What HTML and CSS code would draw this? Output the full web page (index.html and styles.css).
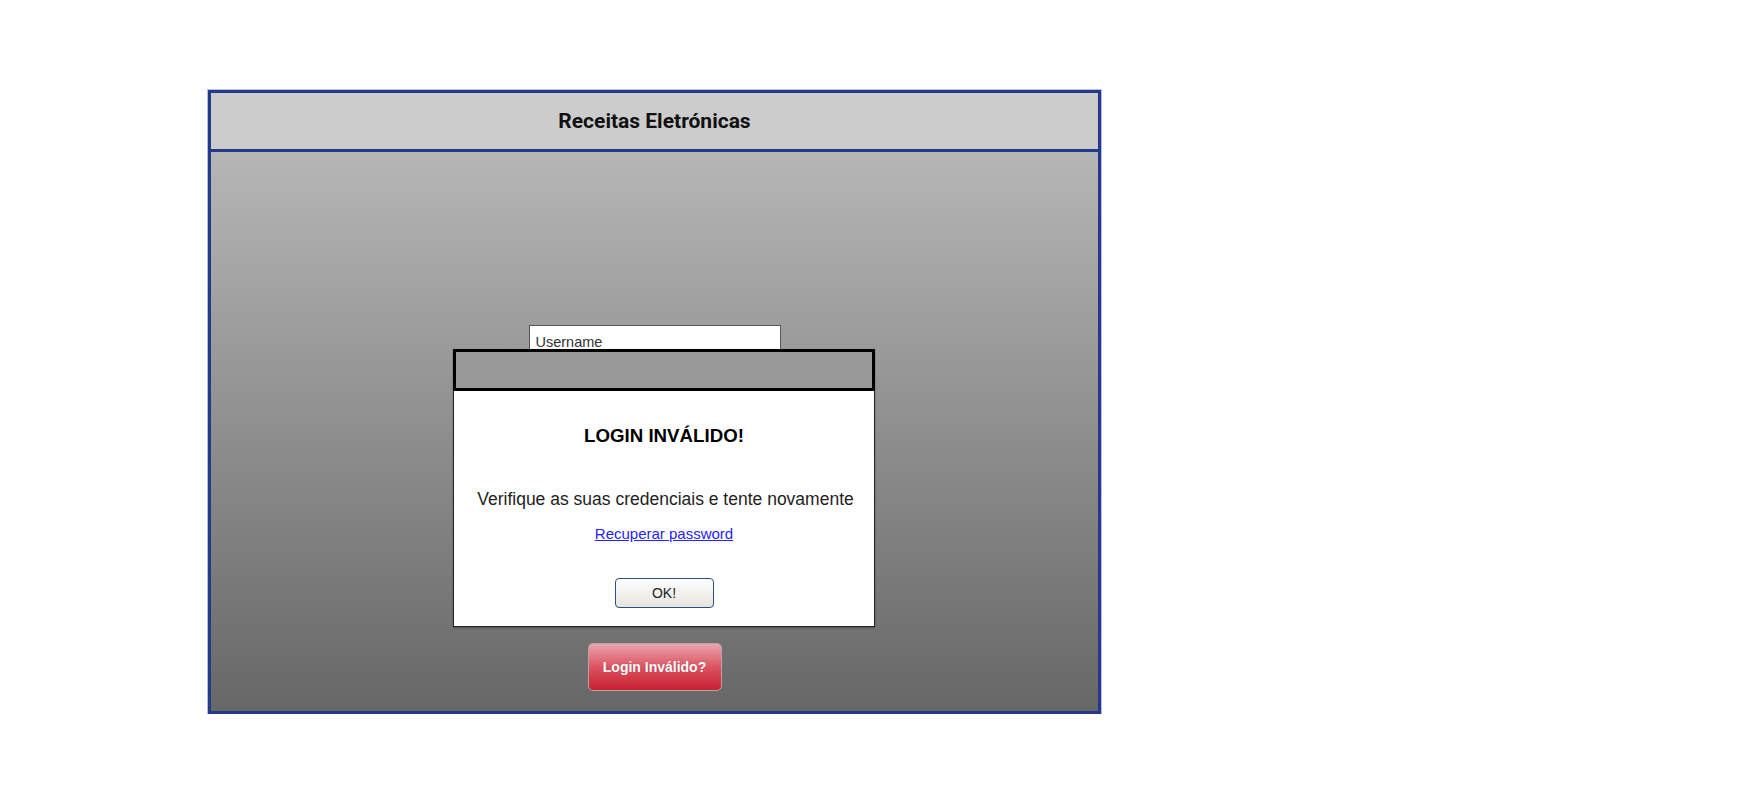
FILE: index.html
```html
<!DOCTYPE html>
<html lang="pt">
<head>
    <meta charset="UTF-8"/>
    <title>Receitas Eletrónicas</title>
    <link rel="stylesheet" href="styles.css">
</head>
<body>
<div class="page">
    <div class="frame">
        <div class="frame-head">Receitas Eletrónicas</div>
        <div class="frame-body">
            <div class="field">Username</div>
            <div class="btn-invalid">Login Inválido?</div>
        </div>
        <!-- janela de aviso por cima do formulário -->
        <div class="dialog">
            <div class="dialog-head"></div>
            <div class="dialog-body">
                <p class="dialog-title">LOGIN INVÁLIDO!</p>
                <p class="dialog-msg">Verifique as suas credenciais e tente novamente</p>
                <a class="dialog-link" href="#">Recuperar password</a>
                <div class="dialog-ok">OK!</div>
            </div>
        </div>
    </div>
</div>
</body>
</html>
```

FILE: styles.css
```css
body {margin:0;background:#fff;font-family:"Liberation Sans", Arial, sans-serif;}
.page {padding:90px 0 0 208px;}

.frame {
    position: relative;
    box-sizing: border-box;
    width: 893px;
    height: 624px;
    border: 3px solid #25398a;
    box-shadow: 0 0 0 1px #b4c0e2;
    display: flex;
    flex-direction: column;
}
.frame-head {
    height: 56px;
    border-bottom: 3px solid #25398a;
    background: #cccccc;
    display: flex;
    align-items: center;
    justify-content: center;
    font-family: Roboto, "Liberation Sans", sans-serif;
    font-weight: 700;
    font-size: 21px;
    color: #111;
}
.frame-body {
    flex: 1;
    background: linear-gradient(#b6b6b6, #676767);
    display: flex;
    flex-direction: column;
    align-items: center;
    padding: 173px 0 20px;
}
.field {
    box-sizing: border-box;
    width: 252px;
    height: 30px;
    background: #fff;
    border: 1.5px solid #555;
    padding: 8px 0 0 6px;
    font-family: "Comic Sans MS", "Liberation Sans", sans-serif;
    font-size: 14.5px;
    color: #333;
}
.btn-invalid {
    margin-top: auto;
    box-sizing: border-box;
    width: 134px;
    height: 48px;
    border: 1px solid #b9a3a6;
    border-radius: 5px;
    background: linear-gradient(#e9a6ae, #dc5362 50%, #c9202f);
    display: flex;
    align-items: center;
    justify-content: center;
    color: #fff;
    font-weight: bold;
    font-size: 14px;
    text-shadow: 0 0 1px rgba(0,0,0,0.25);
}

.dialog {
    position: absolute;
    left: 242px;
    top: 256px;
    width: 422px;
    height: 278px;
    display: flex;
    flex-direction: column;
    box-shadow: 0 1px 2px rgba(0,0,0,0.3);
}
.dialog-head {
    box-sizing: border-box;
    height: 42px;
    border: 3px solid #000;
    background: #999;
}
.dialog-body {
    flex: 1;
    background: #fff;
    border: 1px solid #222;
    border-top: none;
    text-align: center;
    padding-top: 34px;
    display: flex;
    flex-direction: column;
    align-items: center;
}
.dialog-title {margin:0;font-weight:bold;font-size:18.7px;line-height:22px;color:#000;}
.dialog-msg {margin:42px 0 0 3px;font-size:17.5px;line-height:20px;color:#222;}
.dialog-link {
    margin-top: 16px;
    font-family: "Comic Sans MS", "Liberation Sans", sans-serif;
    font-size: 15px;
    line-height: 18px;
    color: #2424ff;
}
.dialog-ok {
    margin-top: 35px;
    box-sizing: border-box;
    width: 99px;
    height: 30px;
    border: 1.5px solid #275286;
    border-radius: 4px;
    background: linear-gradient(#ffffff, #e6e4dc);
    display: flex;
    align-items: center;
    justify-content: center;
    font-size: 14px;
    color: #222;
}
```
